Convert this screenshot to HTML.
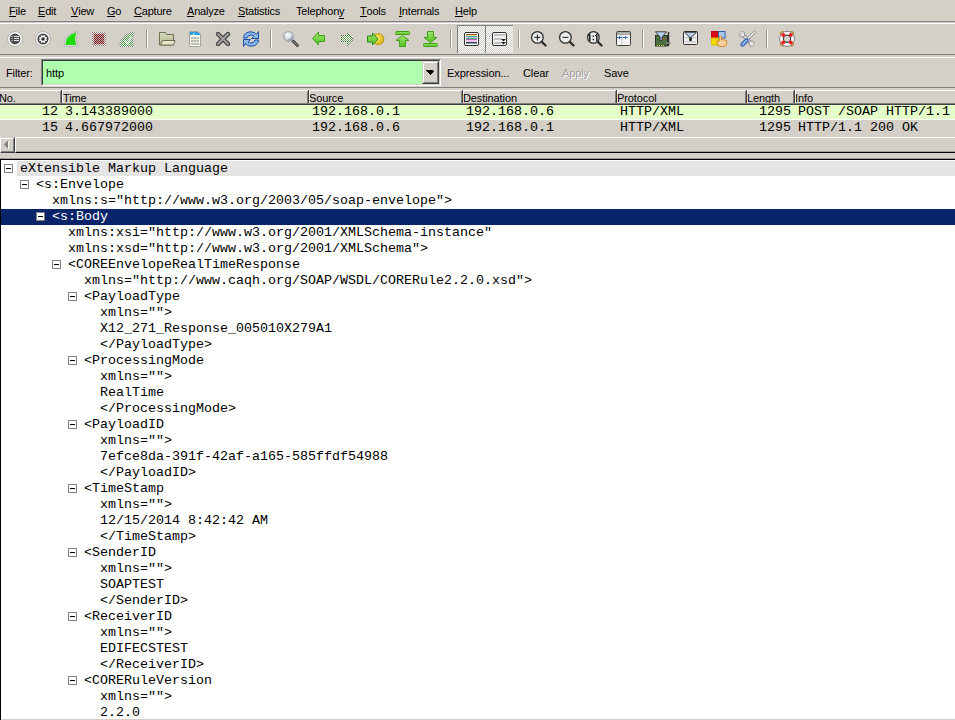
<!DOCTYPE html>
<html><head><meta charset="utf-8">
<style>
*{margin:0;padding:0;box-sizing:border-box}
html,body{width:955px;height:720px;overflow:hidden;background:#d4d0c8;font-family:"Liberation Sans",sans-serif;font-size:11px;color:#000}
.a{position:absolute}
#menu span{position:absolute;top:5px;white-space:pre;line-height:13px;letter-spacing:-0.2px}
#menu u{text-decoration:none;position:relative}
#menu u:after{content:"";position:absolute;left:0;right:0;top:11px;height:1px;background:#000}
#menu u.dy:after{top:13px}
.mono{font-family:"Liberation Mono",monospace;font-size:13.33px}
.row{position:absolute;left:0;width:955px;white-space:pre}
.pl{position:absolute;white-space:pre;line-height:16px}
.tr{position:absolute;left:0;width:955px;height:16px;line-height:16px;white-space:pre}
.tr .t{position:absolute;top:0}
.ex{position:absolute;top:3px;width:9px;height:9px;border:1px solid #808080;background:#fff}
.ex:after{content:"";position:absolute;left:1px;top:3px;width:5px;height:1px;background:#000}
.tr.g{background:#e4e4e4;left:17px;width:938px;height:15px}
.tr.g .t,.tr.g .ex{margin-left:-17px}
.tr.s{background:#0a246a;color:#fff;left:1px;width:954px}
.tr.s .t,.tr.s .ex{margin-left:-1px}
.hd{position:absolute;top:0;height:14px;line-height:14px;white-space:pre;letter-spacing:-0.1px}
.sep{position:absolute;top:0;width:1px;height:14px;background:#404040}
.sepw{position:absolute;top:0;width:1px;height:14px;background:#fff}
.lbl{position:absolute;top:67px;white-space:pre;line-height:13px;letter-spacing:-0.1px}
</style></head><body>
<div id="menu">
<span style="left:9px"><u>F</u>ile</span>
<span style="left:38px"><u>E</u>dit</span>
<span style="left:71px"><u>V</u>iew</span>
<span style="left:107px"><u>G</u>o</span>
<span style="left:134px"><u>C</u>apture</span>
<span style="left:187px"><u>A</u>nalyze</span>
<span style="left:238px"><u>S</u>tatistics</span>
<span style="left:296px">Telephon<u class="dy">y</u></span>
<span style="left:360px"><u>T</u>ools</span>
<span style="left:399px"><u>I</u>nternals</span>
<span style="left:455px"><u>H</u>elp</span>
</div>
<svg class="a" style="left:0;top:0" width="955" height="58">
<defs>
 <pattern id="chk" width="2" height="2" patternUnits="userSpaceOnUse"><rect width="2" height="2" fill="#d4d0c8"/><rect width="1" height="1" fill="#fff"/><rect x="1" y="1" width="1" height="1" fill="#fff"/></pattern>
 <pattern id="chkr" width="2" height="2" patternUnits="userSpaceOnUse"><rect width="2" height="2" fill="#b8c0c0"/><rect width="1" height="1" fill="#8a0a0a"/><rect x="1" y="1" width="1" height="1" fill="#8a0a0a"/></pattern>
 <pattern id="chkpk" width="2" height="2" patternUnits="userSpaceOnUse"><rect width="2" height="2" fill="#e8f0f0"/><rect width="1" height="1" fill="#b86868"/><rect x="1" y="1" width="1" height="1" fill="#b86868"/></pattern>
 <pattern id="chklg" width="2" height="2" patternUnits="userSpaceOnUse"><rect width="2" height="2" fill="#f4f4f4"/><rect width="1" height="1" fill="#78a868"/><rect x="1" y="1" width="1" height="1" fill="#78a868"/></pattern>
 <pattern id="chkg" width="2" height="2" patternUnits="userSpaceOnUse"><rect width="2" height="2" fill="#f0f0f0"/><rect width="1" height="1" fill="#808080"/><rect x="1" y="1" width="1" height="1" fill="#808080"/></pattern>
 <pattern id="chkgr" width="2" height="2" patternUnits="userSpaceOnUse"><rect width="2" height="2" fill="#ececec"/><rect width="1" height="1" fill="#48a048"/><rect x="1" y="1" width="1" height="1" fill="#48a048"/></pattern>
 <pattern id="chkdg" width="2" height="2" patternUnits="userSpaceOnUse"><rect width="2" height="2" fill="#f4f4f4"/><rect width="1" height="1" fill="#2a6a1a"/><rect x="1" y="1" width="1" height="1" fill="#2a6a1a"/></pattern>
 <linearGradient id="gfold" x1="0" y1="0" x2="0" y2="1"><stop offset="0" stop-color="#d8dcb8"/><stop offset="1" stop-color="#b0b490"/></linearGradient>
 <linearGradient id="garr" x1="0" y1="0" x2="0" y2="1"><stop offset="0" stop-color="#a0e870"/><stop offset="1" stop-color="#50c020"/></linearGradient>
 <radialGradient id="gyel" cx="0.4" cy="0.4" r="0.6"><stop offset="0" stop-color="#fff070"/><stop offset="1" stop-color="#d0b010"/></radialGradient>
 <radialGradient id="glens" cx="0.4" cy="0.35" r="0.6"><stop offset="0" stop-color="#ffffff"/><stop offset="1" stop-color="#b8c8d8"/></radialGradient>
</defs>
<!-- etched lines -->
<rect x="0" y="21" width="955" height="1" fill="#808080"/>
<rect x="0" y="23" width="955" height="1" fill="#fff"/>
<rect x="0" y="54" width="955" height="1" fill="#808080"/>
<rect x="0" y="57" width="955" height="1" fill="#fff"/>
<!-- separators -->
<g fill="#9c978c">
 <rect x="146" y="30" width="1" height="18"/><rect x="270" y="30" width="1" height="18"/><rect x="450" y="30" width="1" height="18"/>
 <rect x="518" y="30" width="1" height="18"/><rect x="642" y="30" width="1" height="18"/><rect x="766" y="30" width="1" height="18"/>
</g>
<g fill="#fff">
 <rect x="147" y="30" width="1" height="18"/><rect x="271" y="30" width="1" height="18"/><rect x="451" y="30" width="1" height="18"/>
 <rect x="519" y="30" width="1" height="18"/><rect x="643" y="30" width="1" height="18"/><rect x="767" y="30" width="1" height="18"/>
</g>
<!-- 1 interface list -->
<g transform="translate(15,39)">
 <circle r="7.4" fill="#fff" stroke="#a8a8a8" stroke-width="0.9"/>
 <circle r="5.4" fill="#4c4c4c"/>
 <g fill="#e8e8e8"><rect x="-3.5" y="-3" width="1" height="1"/><rect x="-3.5" y="-1" width="1" height="1"/><rect x="-3.5" y="1" width="1" height="1"/>
 <rect x="-1" y="-3" width="5" height="1"/><rect x="-1" y="-1" width="5" height="1"/><rect x="-1" y="1" width="5" height="1"/></g>
</g>
<!-- 2 options gear -->
<g transform="translate(43,39)">
 <circle r="7.4" fill="#fff" stroke="#a8a8a8" stroke-width="0.9"/>
 <circle r="5.6" fill="#484848"/>
 <path d="M-0.81 -4.02 L0.81 -4.02 L0.83 -2.88 L1.45 -2.62 L2.27 -3.42 L3.42 -2.27 L2.62 -1.45 L2.88 -0.83 L4.02 -0.81 L4.02 0.81 L2.88 0.83 L2.62 1.45 L3.42 2.27 L2.27 3.42 L1.45 2.62 L0.83 2.88 L0.81 4.02 L-0.81 4.02 L-0.83 2.88 L-1.45 2.62 L-2.27 3.42 L-3.42 2.27 L-2.62 1.45 L-2.88 0.83 L-4.02 0.81 L-4.02 -0.81 L-2.88 -0.83 L-2.62 -1.45 L-3.42 -2.27 L-2.27 -3.42 L-1.45 -2.62 L-0.83 -2.88 Z" fill="#f4f4f4" transform="rotate(22)"/>
 <circle r="1.8" fill="#303030"/>
</g>
<!-- 3 shark fin -->
<path d="M64 46 Q64.5 33.5 77.8 31.5 Q75 38.5 77.3 46 Z" fill="#f4f4f4" stroke="#a8a8a8" stroke-width="0.8"/>
<path d="M65.3 45 Q66 34.5 76.5 32.5 Q74.2 38.5 76.3 45 Z" fill="#1ddc0a"/>
<!-- 4 stop (disabled) -->
<rect x="92" y="32" width="14" height="14" fill="url(#chkg)"/>
<rect x="93" y="33" width="12" height="12" fill="url(#chkpk)"/>
<rect x="94" y="34" width="10" height="10" fill="url(#chkr)"/>
<!-- 5 restart (disabled) -->
<path d="M119 47 Q119.5 34 134.8 31 Q132.5 39 134 47 Z" fill="url(#chkg)"/>
<path d="M120.5 46 Q121 35.5 133 32.5 Q131 39 132.8 46 Z" fill="url(#chkgr)"/>
<path d="M124.5 40.5 L127.5 44 L131.5 36.5" fill="none" stroke="#f0f0f0" stroke-width="1.6" opacity="0.75"/>
<!-- 6 open folder -->
<path d="M159.5 45 V32.5 H165.5 L166.5 34.5 H173.5 V45 Z" fill="url(#gfold)" stroke="#6e7052" stroke-width="1"/>
<path d="M160.5 45 L162.5 40.5 H175 L173.5 45 Z" fill="#e4e8c8" stroke="#6e7052" stroke-width="1"/>
<!-- 7 save doc -->
<path d="M189.5 31.5 H198 L200.5 34 V46.5 H189.5 Z" fill="#fcfcee" stroke="#a4a49c" stroke-width="1"/>
<path d="M190 32 H198 L200 34 V35 H190 Z" fill="#2c9ce4"/>
<path d="M192.5 35 L194.5 32.5 L194.2 35 Z" fill="#f4f8f8"/>
<g fill="#b4b4b0"><rect x="191" y="37" width="8" height="2"/><rect x="191" y="40" width="8" height="2"/><rect x="191" y="43" width="8" height="2"/></g>
<g fill="#d8d8d0"><rect x="193" y="37" width="1" height="8"/><rect x="196" y="37" width="1" height="8"/></g>
<!-- 8 close X -->
<path d="M218 34 L228 44 M228 34 L218 44" stroke="#3a3a3a" stroke-width="4.4" stroke-linecap="round"/>
<path d="M218 34 L228 44 M228 34 L218 44" stroke="#a0a0a0" stroke-width="2.2" stroke-linecap="round"/>
<!-- 9 reload -->
<g fill="#8cb8ec" stroke="#1c50a8" stroke-width="1">
<path d="M243.5 38 Q244 32 251 31.8 Q255 32 256.5 34.5 L258.5 31.5 V38.5 H251.5 L254 36 Q253 35 251 35 Q247.5 35 247 38 Z"/>
<path d="M258.5 40 Q258 46 251 46.2 Q247 46 245.5 43.5 L243.5 46.5 V39.5 H250.5 L248 42 Q249 43 251 43 Q254.5 43 255 40 Z"/>
</g>
<!-- 10 find -->
<line x1="293" y1="41" x2="297.5" y2="45.5" stroke="#404040" stroke-width="3" stroke-linecap="round"/>
<line x1="293" y1="41" x2="297.5" y2="45.5" stroke="#909090" stroke-width="1" stroke-linecap="round"/>
<circle cx="288.6" cy="36.4" r="4.8" fill="url(#glens)" stroke="#a8a8a8" stroke-width="1.4"/>
<circle cx="288.6" cy="36.4" r="3.6" fill="none" stroke="#606878" stroke-width="0.6" stroke-dasharray="6 30"/>
<!-- 11 back -->
<path d="M312.5 38.5 L318.5 32 V35.5 H324.5 V41.5 H318.5 V45 Z" fill="url(#garr)" stroke="#40a010" stroke-width="1" stroke-linejoin="round"/>
<!-- 12 forward (disabled) -->
<path d="M341 35 H347 V32 L354 39 L347 46 V42 H341 Z" fill="url(#chkdg)"/>
<path d="M342 36 H348 V34.5 L352 39 L348 43.5 V41 H342 Z" fill="url(#chklg)"/>
<!-- 13 go to packet -->
<circle cx="378.3" cy="39.2" r="5.6" fill="url(#gyel)" stroke="#b89010" stroke-width="0.8"/>
<path d="M367.5 36 H372.5 V33 L378 39 L372.5 45 V42 H367.5 Z" fill="url(#garr)" stroke="#2e8a10" stroke-width="1" stroke-linejoin="round"/>
<!-- 14 first -->
<rect x="395.5" y="31.5" width="14" height="3" rx="1" fill="url(#garr)" stroke="#40a010" stroke-width="1"/>
<path d="M402.5 35.5 L409 40.5 H405.5 V46.5 H399.5 V40.5 H396 Z" fill="url(#garr)" stroke="#40a010" stroke-width="1" stroke-linejoin="round"/>
<!-- 15 last -->
<path d="M427.5 31.5 H433.5 V37.5 H437 L430.5 42.5 L424 37.5 H427.5 Z" fill="url(#garr)" stroke="#40a010" stroke-width="1" stroke-linejoin="round"/>
<rect x="423.5" y="43.5" width="14" height="3" rx="1" fill="url(#garr)" stroke="#40a010" stroke-width="1"/>
<!-- 16,17 pressed toggle buttons -->
<rect x="457" y="25" width="28" height="28" fill="url(#chk)"/>
<rect x="457" y="25" width="28" height="1" fill="#808080"/><rect x="457" y="25" width="1" height="28" fill="#808080"/>
<rect x="485" y="25" width="28" height="28" fill="url(#chk)"/>
<rect x="485" y="25" width="28" height="1" fill="#808080"/><rect x="485" y="25" width="1" height="28" fill="#808080"/>
<rect x="464.5" y="32.5" width="14" height="13" rx="1.5" fill="#fff" stroke="#303030" stroke-width="1"/>
<g>
<rect x="466" y="34" width="11" height="1" fill="#a04848"/>
<rect x="466" y="35" width="11" height="1" fill="#f0ec70"/>
<rect x="466" y="36" width="11" height="1" fill="#40b0a0"/>
<rect x="466" y="37" width="11" height="1" fill="#c4b4f0"/>
<rect x="466" y="38" width="11" height="1" fill="#60b090"/>
<rect x="466" y="39" width="11" height="1" fill="#a868a8"/>
<rect x="466" y="40" width="11" height="2" fill="#f8c4f8"/>
<rect x="466" y="42" width="11" height="1" fill="#503838"/>
<rect x="466" y="43" width="11" height="1" fill="#68b4b4"/>
</g>
<rect x="492.5" y="32.5" width="14" height="13" rx="1.5" fill="#f4f4f4" stroke="#303030" stroke-width="1"/>
<g fill="#c0c0c0"><rect x="494" y="34" width="11" height="2"/><rect x="494" y="38" width="8" height="2"/><rect x="494" y="42" width="8" height="2"/></g>
<g fill="#202020"><path d="M501 39 H506 L503.5 41.5 Z"/><path d="M501 42 H506 L503.5 44.5 Z"/></g>
<!-- 18 zoom in / 19 zoom out / 20 1:1 -->
<g stroke="#303030">
 <line x1="541.5" y1="41.5" x2="545.5" y2="45.5" stroke-width="2.4" stroke-linecap="round"/>
 <circle cx="537.4" cy="37.4" r="5.8" fill="#eceeea" stroke-width="1.3"/>
 <path d="M534.4 37.4 H540.4 M537.4 34.4 V40.4" stroke-width="1.1"/>
 <line x1="569.5" y1="41.5" x2="573.5" y2="45.5" stroke-width="2.4" stroke-linecap="round"/>
 <circle cx="565.4" cy="37.4" r="5.8" fill="#eceeea" stroke-width="1.3"/>
 <path d="M562.4 37.4 H568.4" stroke-width="1.1"/>
 <line x1="597.5" y1="41.5" x2="601.5" y2="45.5" stroke-width="2.4" stroke-linecap="round"/>
 <circle cx="593.4" cy="37.4" r="5.8" fill="#eceeea" stroke-width="1.3"/>
</g>
<g fill="#303030"><rect x="589" y="34" width="1.6" height="7"/><rect x="588" y="35" width="1" height="1"/><rect x="592.6" y="35.5" width="1.5" height="1.5"/><rect x="592.6" y="38.8" width="1.5" height="1.5"/><rect x="596" y="34" width="1.6" height="7"/><rect x="595" y="35" width="1" height="1"/></g>
<!-- 21 resize columns -->
<rect x="616.5" y="31.5" width="14" height="14" rx="1" fill="#f4f4f4" stroke="#404040" stroke-width="1"/>
<rect x="617" y="32" width="13" height="3" fill="#a8a8a8"/>
<g fill="#e0e0e0"><rect x="620" y="33" width="1" height="1"/><rect x="624" y="33" width="1" height="1"/><rect x="627" y="33" width="1" height="1"/></g>
<rect x="621" y="35" width="1.5" height="10" fill="#d4d4d4"/>
<g fill="#3c70b0"><rect x="617" y="37" width="5" height="1"/><rect x="619" y="36" width="1" height="3"/><rect x="622.5" y="37" width="5" height="1"/><rect x="625" y="36" width="1" height="3"/></g>
<!-- 22 capture filter -->
<rect x="655.5" y="35.5" width="12" height="10.5" fill="#4e6e40" stroke="#283820" stroke-width="1"/>
<g fill="#e0d040"><rect x="657" y="45" width="1" height="1"/><rect x="659" y="45" width="1" height="1"/><rect x="661" y="45" width="1" height="1"/><rect x="663" y="45" width="1" height="1"/></g>
<rect x="663" y="38" width="1" height="1.5" fill="#d05040"/><rect x="665" y="38" width="1" height="1.5" fill="#d05040"/>
<path d="M668.5 32 V46" stroke="#282828" stroke-width="1.4"/>
<rect x="666" y="42" width="4.5" height="1.8" fill="#808080"/>
<path d="M655.5 31.8 H666.5 L662 37 V40.5 H660 V37 Z" fill="#b8d4f0" stroke="#303030" stroke-width="0.9" stroke-linejoin="round"/>
<!-- 23 display filter -->
<rect x="683.5" y="31.5" width="14" height="13" rx="1" fill="#f0f0f0" stroke="#303030" stroke-width="1"/>
<g fill="#c8c8c8"><rect x="685" y="37" width="11" height="1.5"/><rect x="685" y="41" width="11" height="1.5"/></g>
<path d="M684.5 32.2 H696.5 L691 37.5 V40.5 H690 V37.5 Z" fill="#b8d4f0" stroke="#202020" stroke-width="0.9" stroke-linejoin="round"/>
<rect x="689.5" y="37.5" width="2" height="3.5" fill="#101010"/>
<!-- 24 coloring rules -->
<rect x="711.5" y="31.5" width="7" height="6.5" fill="#d80818" stroke="#c00010" stroke-width="1"/>
<rect x="718.5" y="31.5" width="6.5" height="6.5" fill="#a8c8f0" stroke="#3060b0" stroke-width="1"/>
<rect x="711.5" y="38" width="7" height="7" fill="#f0d800" stroke="#e0c000" stroke-width="1"/>
<path d="M719.5 36.5 Q720.5 35 721.5 36.5 V40 Q722.5 39.2 723.5 40 Q724.5 39.4 725.5 40.4 Q726.8 40.2 726.8 42 V44 Q726 46.5 723.5 46.5 H720.5 Q717.5 46.5 717 43 L716.5 41.5 Q717 40.3 719 41.5 Z" fill="#f4d098" stroke="#d08018" stroke-width="0.9"/>
<!-- 25 preferences -->
<path d="M743.5 35.5 L750.5 42.5" stroke="#8c8c8c" stroke-width="3.4"/>
<path d="M743.5 35.5 L750.5 42.5" stroke="#ececec" stroke-width="1.6"/>
<circle cx="742.3" cy="34.3" r="2.7" fill="#ececec" stroke="#8c8c8c" stroke-width="1"/><path d="M742.5 34.5 L739.5 31.5" stroke="#d4d0c8" stroke-width="2"/>
<circle cx="751.7" cy="43.7" r="2.7" fill="#ececec" stroke="#8c8c8c" stroke-width="1"/><path d="M751.5 43.5 L754.5 46.5" stroke="#d4d0c8" stroke-width="2"/>
<path d="M754.5 32 L748.5 38" stroke="#8c8c8c" stroke-width="2.8" stroke-linecap="round"/>
<path d="M754.5 32 L748.5 38" stroke="#f4f4f4" stroke-width="1.2" stroke-linecap="round"/>
<path d="M746.5 40.5 L742.5 44.5" stroke="#2458b0" stroke-width="4.2" stroke-linecap="round"/>
<path d="M746.5 40.5 L742.5 44.5" stroke="#90b8ee" stroke-width="2" stroke-linecap="round"/>
<!-- 26 help lifebuoy -->
<g fill="none" stroke="#b07810" stroke-width="1.2">
<path d="M780.5 35 Q780 31.5 783.5 31.5"/><path d="M793.5 35 Q794 31.5 790.5 31.5"/>
<path d="M780.5 42.5 Q780 46 783.5 46"/><path d="M793.5 42.5 Q794 46 790.5 46"/>
</g>
<circle cx="787" cy="38.8" r="5.7" fill="none" stroke="#fff" stroke-width="4.2"/>
<circle cx="787" cy="38.8" r="7.5" fill="none" stroke="#707070" stroke-width="0.9"/>
<circle cx="787" cy="38.8" r="3.6" fill="#d4d0c8" stroke="#404848" stroke-width="1.2"/>
<g fill="#f02020"><circle cx="783.2" cy="35" r="2"/><circle cx="790.8" cy="35" r="2"/><circle cx="783.2" cy="42.6" r="2"/><circle cx="790.8" cy="42.6" r="2"/></g>
</svg>
<!-- filter bar -->
<span class="lbl" style="left:6px">Filter:</span>
<div class="a" style="left:41px;top:59px;width:400px;height:27px;border-top:1px solid #808080;border-left:1px solid #808080;border-right:1px solid #fff;border-bottom:1px solid #fff"></div>
<div class="a" style="left:42px;top:60px;width:398px;height:25px;border-top:1px solid #404040;border-left:1px solid #404040;border-right:1px solid #d4d0c8;border-bottom:1px solid #d4d0c8;background:#afffaf"></div>
<span class="lbl" style="left:46px">http</span>
<div class="a" style="left:422px;top:61px;width:17px;height:23px;background:#d4d0c8;border-top:1px solid #d4d0c8;border-left:1px solid #d4d0c8;border-right:1px solid #404040;border-bottom:1px solid #404040"></div>
<div class="a" style="left:423px;top:62px;width:15px;height:21px;border-top:1px solid #fff;border-left:1px solid #fff;border-right:1px solid #808080;border-bottom:1px solid #808080"></div>
<div class="a" style="left:426px;top:70px;width:7px;height:1px;background:#000"></div>
<div class="a" style="left:427px;top:71px;width:7px;height:1px;background:#000"></div>
<div class="a" style="left:428px;top:72px;width:5px;height:1px;background:#000"></div>
<div class="a" style="left:429px;top:73px;width:3px;height:1px;background:#000"></div>
<div class="a" style="left:430px;top:74px;width:1px;height:1px;background:#000"></div>
<span class="lbl" style="left:447px">Expression...</span>
<span class="lbl" style="left:523px">Clear</span>
<span class="lbl" style="left:562px;color:#a0a0a0;text-shadow:1px 1px 0 #fff">Apply</span>
<span class="lbl" style="left:604px">Save</span>
<div class="a" style="left:0;top:87px;width:955px;height:1px;background:#808080"></div>
<div class="a" style="left:0;top:90px;width:955px;height:1px;background:#fff"></div>

<!-- packet list header -->
<div class="a" style="left:0;top:90px;width:955px;height:14px">
 <span class="hd" style="left:-1px;top:1px">No.</span>
 <span class="sep" style="left:61px"></span><span class="sepw" style="left:62px"></span><span class="hd" style="left:63px;top:1px">Time</span>
 <span class="sep" style="left:308px"></span><span class="sepw" style="left:309px"></span><span class="hd" style="left:309px;top:1px">Source</span>
 <span class="sep" style="left:462px"></span><span class="sepw" style="left:463px"></span><span class="hd" style="left:463px;top:1px">Destination</span>
 <span class="sep" style="left:616px"></span><span class="sepw" style="left:617px"></span><span class="hd" style="left:617px;top:1px">Protocol</span>
 <span class="sep" style="left:746px"></span><span class="sepw" style="left:747px"></span><span class="hd" style="left:747px;top:1px">Length</span>
 <span class="sep" style="left:794px"></span><span class="sepw" style="left:795px"></span><span class="hd" style="left:795px;top:1px">Info</span>
</div>
<div class="a" style="left:0;top:103px;width:955px;height:1px;background:#808080"></div>
<div class="a" style="left:0;top:104px;width:955px;height:1px;background:#404040"></div>
<div class="a" style="left:60px;top:91px;width:1px;height:12px;background:#808080"></div>
<div class="a" style="left:307px;top:91px;width:1px;height:12px;background:#808080"></div>
<div class="a" style="left:461px;top:91px;width:1px;height:12px;background:#808080"></div>
<div class="a" style="left:615px;top:91px;width:1px;height:12px;background:#808080"></div>
<div class="a" style="left:745px;top:91px;width:1px;height:12px;background:#808080"></div>
<div class="a" style="left:793px;top:91px;width:1px;height:12px;background:#808080"></div>
<div class="row mono" style="top:105px;height:14px;background:#e4ffc7">
 <span class="pl" style="left:42px;top:-1px">12</span>
 <span class="pl" style="left:65px;top:-1px">3.143389000</span>
 <span class="pl" style="left:312px;top:-1px">192.168.0.1</span>
 <span class="pl" style="left:466px;top:-1px">192.168.0.6</span>
 <span class="pl" style="left:620px;top:-1px">HTTP/XML</span>
 <span class="pl" style="left:759px;top:-1px">1295</span>
 <span class="pl" style="left:798px;top:-1px">POST /SOAP HTTP/1.1</span>
</div>
<div class="a" style="left:0;top:119px;width:955px;height:1px;background:#fff"></div>
<div class="row mono" style="top:120px;height:17px">
 <span class="pl" style="left:42px;top:0">15</span>
 <span class="pl" style="left:65px;top:0">4.667972000</span>
 <span class="pl" style="left:312px;top:0">192.168.0.6</span>
 <span class="pl" style="left:466px;top:0">192.168.0.1</span>
 <span class="pl" style="left:620px;top:0">HTTP/XML</span>
 <span class="pl" style="left:759px;top:0">1295</span>
 <span class="pl" style="left:798px;top:0">HTTP/1.1 200 OK</span>
</div>
<!-- horizontal scrollbar -->
<div class="a" style="left:0;top:137px;width:15px;height:16px;border-top:1px solid #d4d0c8;border-left:1px solid #fff;border-right:1px solid #404040;border-bottom:1px solid #404040"></div>
<div class="a" style="left:1px;top:138px;width:13px;height:14px;border-top:1px solid #fff;border-right:1px solid #808080;border-bottom:1px solid #808080"></div>
<svg class="a" style="left:0;top:137px" width="15" height="16"><path d="M4 7.5 L8 3.5 V11.5 Z" fill="#808080"/><path d="M8.5 4 V12" stroke="#fff" stroke-width="1"/></svg>
<div class="a" style="left:15px;top:137px;width:940px;height:16px;border-top:1px solid #fff;border-left:1px solid #fff;border-bottom:1px solid #000"></div>
<div class="a" style="left:16px;top:151px;width:939px;height:1px;background:#a09c94"></div>
<div class="a" style="left:0;top:158px;width:955px;height:1px;background:#a09c94"></div>

<!-- tree pane -->
<div class="a" style="left:0;top:159px;width:955px;height:561px;border-top:1px solid #000;border-left:1px solid #000;background:#fff"></div>
<div class="a mono" style="left:0;top:161px;width:955px;height:559px;overflow:hidden">
<div class="tr g" style="top:0px"><i class="ex" style="left:4px"></i><span class="t" style="left:20px">eXtensible Markup Language</span></div>
<div class="tr" style="top:16px"><i class="ex" style="left:20px"></i><span class="t" style="left:36px">&lt;s:Envelope</span></div>
<div class="tr" style="top:32px"><span class="t" style="left:52px">xmlns:s="http://www.w3.org/2003/05/soap-envelope"&gt;</span></div>
<div class="tr s" style="top:48px"><i class="ex" style="left:36px"></i><span class="t" style="left:52px">&lt;s:Body</span></div>
<div class="tr" style="top:64px"><span class="t" style="left:68px">xmlns:xsi="http://www.w3.org/2001/XMLSchema-instance"</span></div>
<div class="tr" style="top:80px"><span class="t" style="left:68px">xmlns:xsd="http://www.w3.org/2001/XMLSchema"&gt;</span></div>
<div class="tr" style="top:96px"><i class="ex" style="left:52px"></i><span class="t" style="left:68px">&lt;COREEnvelopeRealTimeResponse</span></div>
<div class="tr" style="top:112px"><span class="t" style="left:84px">xmlns="http://www.caqh.org/SOAP/WSDL/CORERule2.2.0.xsd"&gt;</span></div>
<div class="tr" style="top:128px"><i class="ex" style="left:68px"></i><span class="t" style="left:84px">&lt;PayloadType</span></div>
<div class="tr" style="top:144px"><span class="t" style="left:100px">xmlns=""&gt;</span></div>
<div class="tr" style="top:160px"><span class="t" style="left:100px">X12_271_Response_005010X279A1</span></div>
<div class="tr" style="top:176px"><span class="t" style="left:100px">&lt;/PayloadType&gt;</span></div>
<div class="tr" style="top:192px"><i class="ex" style="left:68px"></i><span class="t" style="left:84px">&lt;ProcessingMode</span></div>
<div class="tr" style="top:208px"><span class="t" style="left:100px">xmlns=""&gt;</span></div>
<div class="tr" style="top:224px"><span class="t" style="left:100px">RealTime</span></div>
<div class="tr" style="top:240px"><span class="t" style="left:100px">&lt;/ProcessingMode&gt;</span></div>
<div class="tr" style="top:256px"><i class="ex" style="left:68px"></i><span class="t" style="left:84px">&lt;PayloadID</span></div>
<div class="tr" style="top:272px"><span class="t" style="left:100px">xmlns=""&gt;</span></div>
<div class="tr" style="top:288px"><span class="t" style="left:100px">7efce8da-391f-42af-a165-585ffdf54988</span></div>
<div class="tr" style="top:304px"><span class="t" style="left:100px">&lt;/PayloadID&gt;</span></div>
<div class="tr" style="top:320px"><i class="ex" style="left:68px"></i><span class="t" style="left:84px">&lt;TimeStamp</span></div>
<div class="tr" style="top:336px"><span class="t" style="left:100px">xmlns=""&gt;</span></div>
<div class="tr" style="top:352px"><span class="t" style="left:100px">12/15/2014 8:42:42 AM</span></div>
<div class="tr" style="top:368px"><span class="t" style="left:100px">&lt;/TimeStamp&gt;</span></div>
<div class="tr" style="top:384px"><i class="ex" style="left:68px"></i><span class="t" style="left:84px">&lt;SenderID</span></div>
<div class="tr" style="top:400px"><span class="t" style="left:100px">xmlns=""&gt;</span></div>
<div class="tr" style="top:416px"><span class="t" style="left:100px">SOAPTEST</span></div>
<div class="tr" style="top:432px"><span class="t" style="left:100px">&lt;/SenderID&gt;</span></div>
<div class="tr" style="top:448px"><i class="ex" style="left:68px"></i><span class="t" style="left:84px">&lt;ReceiverID</span></div>
<div class="tr" style="top:464px"><span class="t" style="left:100px">xmlns=""&gt;</span></div>
<div class="tr" style="top:480px"><span class="t" style="left:100px">EDIFECSTEST</span></div>
<div class="tr" style="top:496px"><span class="t" style="left:100px">&lt;/ReceiverID&gt;</span></div>
<div class="tr" style="top:512px"><i class="ex" style="left:68px"></i><span class="t" style="left:84px">&lt;CORERuleVersion</span></div>
<div class="tr" style="top:528px"><span class="t" style="left:100px">xmlns=""&gt;</span></div>
<div class="tr" style="top:544px"><span class="t" style="left:100px">2.2.0</span></div>
<div class="tr" style="top:560px"><span class="t" style="left:100px">&lt;/CORERuleVersion&gt;</span></div></div>
<div class="a" style="left:1px;top:719px;width:954px;height:1px;background:#d4d0c8"></div>
</body></html>
